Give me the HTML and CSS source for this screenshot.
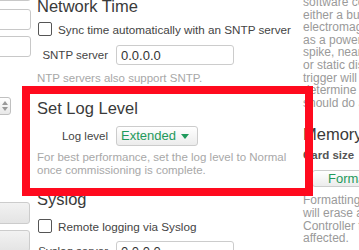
FILE: index.html
```html
<!DOCTYPE html>
<html>
<head>
   <title>Settings</title>
   <link rel="stylesheet" href="styles.css">
</head>
<body>
   <div class="page">
       <!-- left column (mostly scrolled out of view) -->
       <div class="col-left">
           <input type="text" class="field" value="">
           <input type="text" class="field gap8" value="0.0.0.0">
           <input type="text" class="field gap6" value="">
           <div class="spinner"><span class="up"></span><span class="down"></span></div>
           <div class="gray-button first">Apply</div>
           <div class="gray-button second">Reset</div>
       </div>

       <!-- middle column -->
       <div class="col-mid">
           <h2 class="heading top">Network Time</h2>
           <label class="check-row first-check">
               <input type="checkbox" class="check">
               <span>Sync time automatically with an SNTP server</span>
           </label>
           <div class="form-row sntp-row">
               <span class="form-label">SNTP server</span>
               <input type="text" class="text-input" value="0.0.0.0">
           </div>
           <p class="help ntp-help">NTP servers also support SNTP.</p>

           <h2 class="heading log-heading">Set Log Level</h2>
           <div class="form-row log-row">
               <span class="form-label">Log level</span>
               <div class="select">Extended<span class="caret"></span></div>
           </div>
           <p class="help log-help">For best performance, set the log level to Normal<br>once commissioning is complete.</p>

           <h2 class="heading syslog-heading">Syslog</h2>
           <label class="check-row syslog-check">
               <input type="checkbox" class="check">
               <span>Remote logging via Syslog</span>
           </label>
           <div class="form-row syslog-row">
               <span class="form-label">Syslog server</span>
               <input type="text" class="text-input" value="0.0.0.0">
           </div>
       </div>

       <!-- right column -->
       <div class="col-right">
           <p class="side-text">software corruption,<br>either a bug or<br>electromagnetic<br>as a power<br>spike, nearby<br>or static discharge<br>trigger will<br>determine<br>should do a</p>
           <h2 class="heading memory-heading">Memory</h2>
           <div class="card-size">Card size</div>
           <div class="format-button">Format</div>
           <p class="side-text">Formatting the card<br>will erase all<br>Controller files<br>affected.</p>
       </div>
   </div>

   <!-- red highlight frame drawn over the page -->
   <div class="highlight"></div>
</body>
</html>
```

FILE: styles.css
```css
/* page base */
body {
    margin: 0;
    width: 359px;
    height: 250px;
    overflow: hidden;
    background-color: white;
    font-family: "Liberation Sans", Arial, sans-serif;
    font-size: 12px;
    color: #444;
    position: relative;
}

.page {
    display: flex;
    gap: 6px;
}

/* left column */
.col-left {
    flex: none;
    width: 120px;
    margin-left: -89px;
    display: flex;
    flex-direction: column;
    align-items: flex-end;
}

.field {
    box-sizing: border-box;
    width: 110px;
    height: 21px;
    margin: -20px 0 0 0;
    padding: 0 4px;
    border: 1px solid #c8c8c8;
    border-radius: 3px;
    font-family: inherit;
    font-size: 13px;
    color: #333;
}

.gap8 { margin-top: 8px; }
.gap6 { margin-top: 6px; }

.spinner {
    box-sizing: border-box;
    align-self: flex-start;
    margin: 40px 0 0 60px;
    width: 40px;
    height: 18px;
    border: 1px solid #c0c0c0;
    border-radius: 3px;
    background: linear-gradient(#fff, #e8e8e8);
    display: flex;
    flex-direction: column;
    align-items: flex-end;
    justify-content: center;
    gap: 2px;
    padding-right: 2px;
}

.spinner span {
    width: 0;
    height: 0;
    border-left: 3px solid transparent;
    border-right: 3px solid transparent;
}

.spinner .up { border-bottom: 4px solid #999; }
.spinner .down { border-top: 4px solid #999; }

.gray-button {
    box-sizing: border-box;
    width: 100px;
    height: 22px;
    margin-right: 1px;
    border: 1px solid #ccc;
    border-radius: 3px;
    background: linear-gradient(#f2f2f2, #e4e4e4);
    color: #555;
    text-align: center;
    line-height: 20px;
    font-size: 12px;
}

.gray-button.first { margin-top: 87px; }
.gray-button.second { margin-top: 6px; }

/* middle column */
.col-mid {
    flex: none;
    width: 260px;
}

.heading {
    margin: 0;
    font-size: 16.5px;
    font-weight: normal;
    line-height: 20px;
    color: #3a3a3a;
}

.heading.top { margin-top: -4px; }

.check-row {
    display: flex;
    align-items: center;
    gap: 6px;
    height: 14px;
    font-size: 11.7px;
    color: #444;
    white-space: nowrap;
}

.first-check { margin-top: 6px; }

.check {
    appearance: none;
    margin: 0 0 0 1px;
    width: 14px;
    height: 14px;
    border: 1px solid #555;
    border-radius: 2px;
    background-color: white;
}

.form-row {
    display: flex;
    align-items: center;
    gap: 8px;
}

.form-label {
    width: 71px;
    text-align: right;
    font-size: 11.5px;
    color: #444;
    white-space: nowrap;
}

.text-input {
    box-sizing: border-box;
    width: 118px;
    height: 20px;
    margin: 0;
    padding: 0 4px;
    border: 1px solid #ccc;
    border-radius: 3px;
    font-family: inherit;
    font-size: 13px;
    color: #333;
}

.sntp-row { margin-top: 9px; }

.help {
    margin: 0;
    font-size: 11.5px;
    line-height: 13px;
    color: #a8a8a8;
    white-space: nowrap;
}

.ntp-help { margin-top: 7px; }

.log-heading { margin-top: 13px; }

.log-row { margin-top: 8px; }

.select {
    box-sizing: border-box;
    width: 82px;
    height: 20px;
    padding: 0 4px;
    border: 1px solid #ccc;
    border-radius: 3px;
    background: linear-gradient(#fff, #ececec);
    color: #1f9a5c;
    font-size: 13px;
    line-height: 18px;
    display: flex;
    justify-content: space-between;
    align-items: center;
}

.caret {
    width: 0;
    height: 0;
    border-left: 4px solid transparent;
    border-right: 4px solid transparent;
    border-top: 5px solid #1f9a5c;
    margin-right: 4px;
}

.log-help { margin-top: 5px; }

.syslog-heading { margin-top: 12px; }

.syslog-check { margin-top: 10px; }

.syslog-row { margin-top: 8px; }

/* right column */
.col-right {
    flex: none;
    width: 200px;
}

.side-text {
    margin: -4px 0 0 0;
    font-size: 12px;
    line-height: 12.6px;
    color: #9a9a9a;
    white-space: nowrap;
}

.memory-heading { margin-top: 15px; }

.card-size {
    margin-top: 4px;
    font-size: 11.5px;
    line-height: 14px;
    font-weight: bold;
    color: #555;
}

.format-button {
    box-sizing: border-box;
    margin: 8px 0 0 9px;
    width: 90px;
    height: 17px;
    padding-left: 15px;
    border: 1px solid #ccc;
    border-radius: 3px;
    background: linear-gradient(#fff, #ececec);
    color: #1f9a5c;
    font-size: 13px;
    line-height: 15px;
}

.format-button + .side-text { margin-top: 7px; }

/* red annotation frame */
.highlight {
    position: absolute;
    left: 22px;
    top: 86px;
    width: 291px;
    height: 110px;
    box-sizing: border-box;
    border: 8px solid #ff0a1e;
}
```
